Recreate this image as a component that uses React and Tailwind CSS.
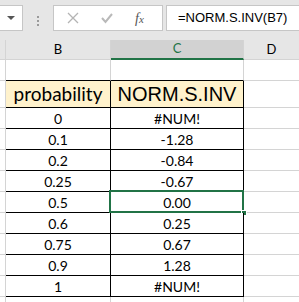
const grid = "border-[#d4d4d4]";

const rows = [
  ["0", "#NUM!"],
  ["0.1", "-1.28"],
  ["0.2", "-0.84"],
  ["0.25", "-0.67"],
  ["0.5", "0.00"],
  ["0.6", "0.25"],
  ["0.75", "0.67"],
  ["0.9", "1.28"],
  ["1", "#NUM!"],
];

function Toolbar() {
  return (
    <div className="flex h-[40px] bg-[#e6e6e6] pt-[5px]">
      <div className="relative flex h-[26px] w-[23px] items-center justify-end border-y border-r border-[#c6c6c6] bg-white pr-[7px]">
        <div className="h-0 w-0 border-x-[4px] border-t-[4px] border-x-transparent border-t-[#555]" />
      </div>
      <div className="flex w-[30px] flex-col items-center justify-center gap-[2px] pb-[4px]">
        <div className="h-[2px] w-[2px] bg-[#9a9a9a]" />
        <div className="h-[2px] w-[2px] bg-[#9a9a9a]" />
        <div className="h-[2px] w-[2px] bg-[#9a9a9a]" />
      </div>
      <div className="flex h-[26px] w-[110px] items-center border border-[#c6c6c6] bg-white">
        <svg width="12" height="12" viewBox="0 0 12 12" className="ml-[13px]">
          <path d="M1 1 L11 11 M11 1 L1 11" stroke="#b4b4b4" strokeWidth="1.3" />
        </svg>
        <svg width="12" height="12" viewBox="0 0 12 12" className="ml-[22px]">
          <path d="M1 6 L4.5 10 L11 2" stroke="#b9b9b9" strokeWidth="2" fill="none" />
        </svg>
        <span
          className="ml-[22px] text-[14px] italic text-[#555]"
          style={{ fontFamily: '"Liberation Serif", serif' }}
        >
          f<span className="text-[11px]">x</span>
        </span>
      </div>
      <div
        className="ml-[3px] flex h-[26px] flex-1 items-center border-y border-l border-[#c6c6c6] bg-white pl-[11px] text-[13px] text-black"
        style={{ fontFamily: '"Liberation Sans", sans-serif' }}
      >
        =NORM.S.INV(B7)
      </div>
    </div>
  );
}

function ColumnHeaders() {
  return (
    <div
      className="flex h-[20px] bg-[#e6e6e6] text-[13px]"
      style={{ fontFamily: 'Lato, sans-serif' }}
    >
      <div className={`w-[6px] border-r border-b ${grid}`} />
      <div className={`flex w-[105px] items-center justify-center border-r border-b ${grid} text-black`}>
        B
      </div>
      <div className="flex w-[133px] items-center justify-center border-r border-r-[#d4d4d4] border-b-2 border-b-[#217346] bg-[#d2d2d2] text-[#217346]">
        C
      </div>
      <div className={`flex flex-1 items-center justify-center border-b ${grid} text-black`}>D</div>
    </div>
  );
}

function Row({ h, b, c, bBorder, header, selected }) {
  const rowBorder = bBorder ? "border-b-black" : "border-b-[#d4d4d4]";
  return (
    <div className="flex" style={{ height: h }}>
      <div className={`w-[6px] border-r border-b ${grid}`} />
      <div
        className={`flex w-[105px] items-center justify-center border-r border-b ${rowBorder} ${
          b !== null ? "border-r-black" : "border-r-[#d4d4d4]"
        } ${header ? "bg-[#fff2cc]" : "bg-white"}`}
      >
        {b}
      </div>
      <div
        className={`relative flex w-[133px] items-center justify-center border-r border-b ${rowBorder} ${
          b !== null ? "border-r-black" : "border-r-[#d4d4d4]"
        } ${header ? "bg-[#fff2cc]" : "bg-white"}`}
      >
        {c}
        {selected && (
          <>
            <div className="absolute -top-[2px] -left-[2px] -right-[1px] -bottom-[1px] border-2 border-[#217346]" />
            <div className="absolute -right-[4px] -bottom-[4px] h-[6px] w-[6px] border border-white bg-[#217346]" />
          </>
        )}
      </div>
      <div className={`flex-1 border-b ${grid}`} />
    </div>
  );
}

export default function App() {
  return (
    <div className="h-[302px] w-[299px] overflow-hidden bg-white">
      <Toolbar />
      <ColumnHeaders />
      <Row h={21} b={null} c={null} bBorder />
      <div className="flex h-[27px]">
        <div className={`w-[6px] border-r border-b ${grid}`} />
        <div
          className="flex w-[105px] items-center justify-center border-r border-b border-black bg-[#fff2cc] text-[19px] text-black"
          style={{ fontFamily: 'Lato, sans-serif' }}
        >
          probability
        </div>
        <div
          className="flex w-[133px] items-center justify-center border-r border-b border-black bg-[#fff2cc] text-[20px] text-black"
          style={{ fontFamily: '"Liberation Sans", sans-serif' }}
        >
          NORM.S.INV
        </div>
        <div className={`flex-1 border-b ${grid}`} />
      </div>
      <div className="text-[14px] text-black" style={{ fontFamily: 'Lato, sans-serif' }}>
        {rows.map(([b, c], i) => (
          <Row key={i} h={21} b={b} c={c} bBorder selected={i === 4} />
        ))}
        <Row h={21} b={null} c={null} />
      </div>
    </div>
  );
}
